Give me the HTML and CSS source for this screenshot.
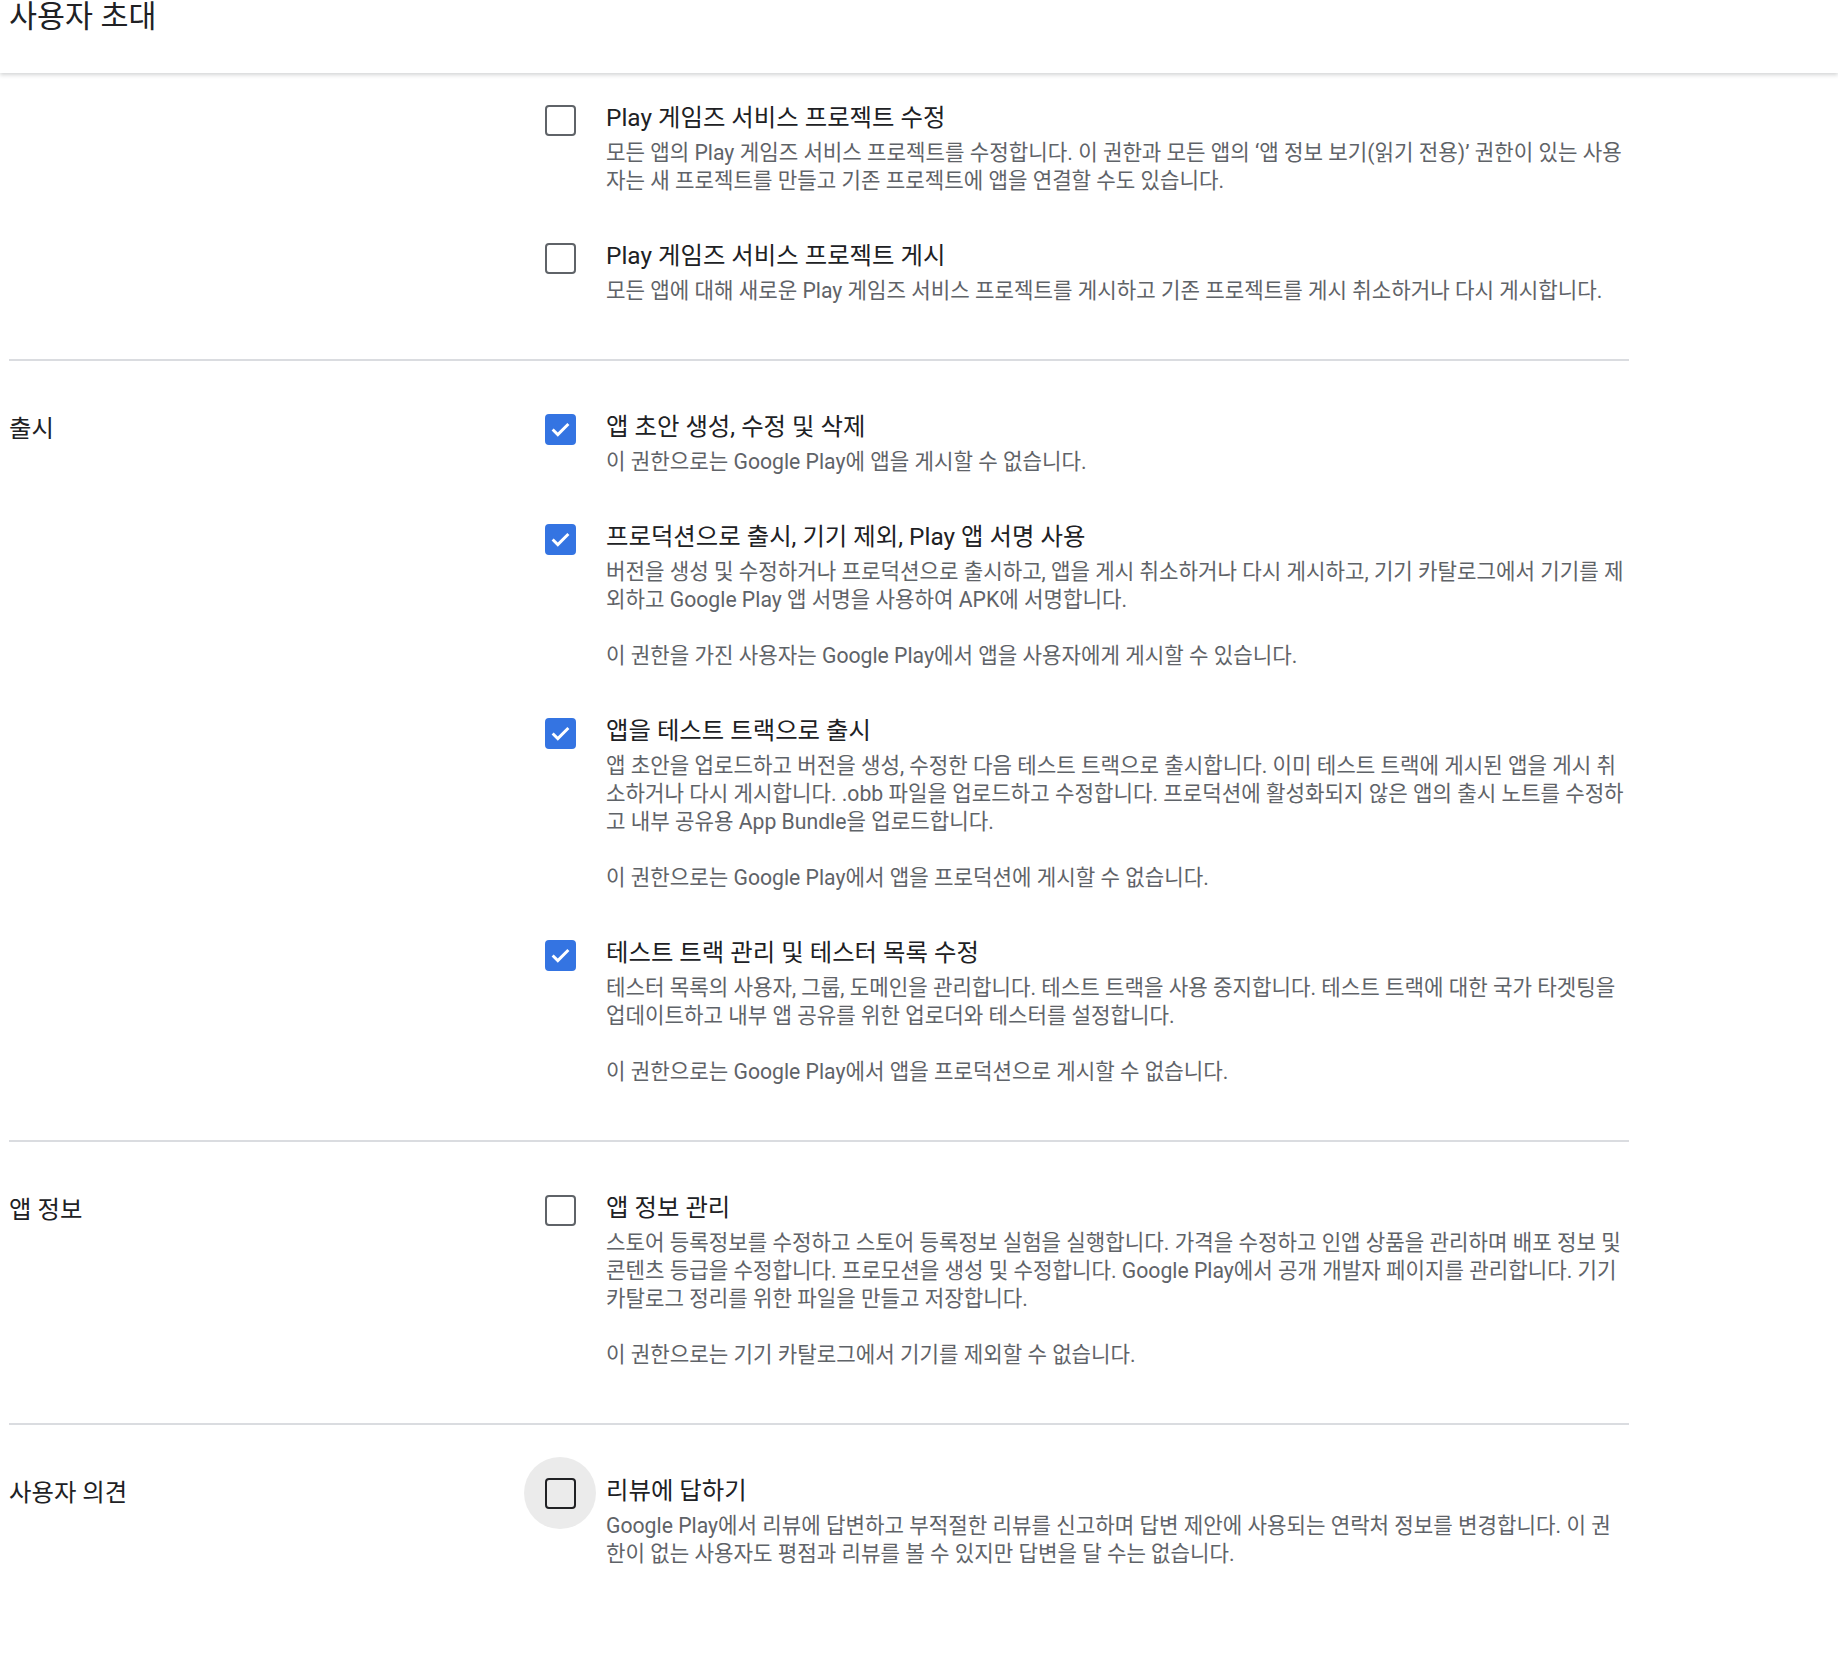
FILE: index.html
```html
<!DOCTYPE html>
<html lang="ko">
<head>
    <meta charset="UTF-8">
    <meta name="viewport" content="width=device-width, initial-scale=1.0">
    <title>사용자 초대 | Play Console</title>
    <link rel="stylesheet" href="styles.css">
</head>
<body>
    <header class="page-header">
        <h1 class="page-title">사용자 초대</h1>
    </header>

    <main class="permissions">
        <!-- Play 게임즈 서비스 (위쪽은 스크롤됨) -->
        <section class="perm-section first">
            <div class="section-label"></div>
            <div class="perm-list">
                <div class="perm-item">
                    <div class="checkbox-touch"><span class="checkbox"></span></div>
                    <div class="perm-text">
                        <div class="perm-title">Play 게임즈 서비스 프로젝트 수정</div>
                        <p class="perm-desc">모든 앱의 Play 게임즈 서비스 프로젝트를 수정합니다. 이 권한과 모든 앱의 ‘앱 정보 보기(읽기 전용)’ 권한이 있는 사용<br>자는 새 프로젝트를 만들고 기존 프로젝트에 앱을 연결할 수도 있습니다.</p>
                    </div>
                </div>
                <div class="perm-item">
                    <div class="checkbox-touch"><span class="checkbox"></span></div>
                    <div class="perm-text">
                        <div class="perm-title">Play 게임즈 서비스 프로젝트 게시</div>
                        <p class="perm-desc">모든 앱에 대해 새로운 Play 게임즈 서비스 프로젝트를 게시하고 기존 프로젝트를 게시 취소하거나 다시 게시합니다.</p>
                    </div>
                </div>
            </div>
        </section>

        <section class="perm-section">
            <div class="section-label">출시</div>
            <div class="perm-list">
                <div class="perm-item">
                    <div class="checkbox-touch"><span class="checkbox checked"><svg viewBox="0 0 24 24"><polyline points="5 12.5 9.6 17 19 7.5"/></svg></span></div>
                    <div class="perm-text">
                        <div class="perm-title">앱 초안 생성, 수정 및 삭제</div>
                        <p class="perm-desc">이 권한으로는 Google Play에 앱을 게시할 수 없습니다.</p>
                    </div>
                </div>
                <div class="perm-item">
                    <div class="checkbox-touch"><span class="checkbox checked"><svg viewBox="0 0 24 24"><polyline points="5 12.5 9.6 17 19 7.5"/></svg></span></div>
                    <div class="perm-text">
                        <div class="perm-title">프로덕션으로 출시, 기기 제외, Play 앱 서명 사용</div>
                        <p class="perm-desc">버전을 생성 및 수정하거나 프로덕션으로 출시하고, 앱을 게시 취소하거나 다시 게시하고, 기기 카탈로그에서 기기를 제<br>외하고 Google Play 앱 서명을 사용하여 APK에 서명합니다.</p>
                        <p class="perm-desc note">이 권한을 가진 사용자는 Google Play에서 앱을 사용자에게 게시할 수 있습니다.</p>
                    </div>
                </div>
                <div class="perm-item">
                    <div class="checkbox-touch"><span class="checkbox checked"><svg viewBox="0 0 24 24"><polyline points="5 12.5 9.6 17 19 7.5"/></svg></span></div>
                    <div class="perm-text">
                        <div class="perm-title">앱을 테스트 트랙으로 출시</div>
                        <p class="perm-desc">앱 초안을 업로드하고 버전을 생성, 수정한 다음 테스트 트랙으로 출시합니다. 이미 테스트 트랙에 게시된 앱을 게시 취<br>소하거나 다시 게시합니다. .obb 파일을 업로드하고 수정합니다. 프로덕션에 활성화되지 않은 앱의 출시 노트를 수정하<br>고 내부 공유용 App Bundle을 업로드합니다.</p>
                        <p class="perm-desc note">이 권한으로는 Google Play에서 앱을 프로덕션에 게시할 수 없습니다.</p>
                    </div>
                </div>
                <div class="perm-item">
                    <div class="checkbox-touch"><span class="checkbox checked"><svg viewBox="0 0 24 24"><polyline points="5 12.5 9.6 17 19 7.5"/></svg></span></div>
                    <div class="perm-text">
                        <div class="perm-title">테스트 트랙 관리 및 테스터 목록 수정</div>
                        <p class="perm-desc">테스터 목록의 사용자, 그룹, 도메인을 관리합니다. 테스트 트랙을 사용 중지합니다. 테스트 트랙에 대한 국가 타겟팅을<br>업데이트하고 내부 앱 공유를 위한 업로더와 테스터를 설정합니다.</p>
                        <p class="perm-desc note">이 권한으로는 Google Play에서 앱을 프로덕션으로 게시할 수 없습니다.</p>
                    </div>
                </div>
            </div>
        </section>

        <section class="perm-section">
            <div class="section-label">앱 정보</div>
            <div class="perm-list">
                <div class="perm-item">
                    <div class="checkbox-touch"><span class="checkbox"></span></div>
                    <div class="perm-text">
                        <div class="perm-title">앱 정보 관리</div>
                        <p class="perm-desc">스토어 등록정보를 수정하고 스토어 등록정보 실험을 실행합니다. 가격을 수정하고 인앱 상품을 관리하며 배포 정보 및<br>콘텐츠 등급을 수정합니다. 프로모션을 생성 및 수정합니다. Google Play에서 공개 개발자 페이지를 관리합니다. 기기<br>카탈로그 정리를 위한 파일을 만들고 저장합니다.</p>
                        <p class="perm-desc note">이 권한으로는 기기 카탈로그에서 기기를 제외할 수 없습니다.</p>
                    </div>
                </div>
            </div>
        </section>

        <section class="perm-section">
            <div class="section-label">사용자 의견</div>
            <div class="perm-list">
                <div class="perm-item">
                    <div class="checkbox-touch hover"><span class="checkbox"></span></div>
                    <div class="perm-text">
                        <div class="perm-title">리뷰에 답하기</div>
                        <p class="perm-desc">Google Play에서 리뷰에 답변하고 부적절한 리뷰를 신고하며 답변 제안에 사용되는 연락처 정보를 변경합니다. 이 권<br>한이 없는 사용자도 평점과 리뷰를 볼 수 있지만 답변을 달 수는 없습니다.</p>
                    </div>
                </div>
            </div>
        </section>
    </main>
</body>
</html>
```

FILE: styles.css
```css
* {
    margin: 0;
    padding: 0;
    box-sizing: border-box;
}

body {
    background-color: #fff;
    font-family: Roboto, "Noto Sans CJK KR", sans-serif;
    color: #202124;
}

.page-header {
    background: #fff;
    padding: 0 9px 39px;
    box-shadow: 0 2px 4px rgba(60, 64, 67, 0.22);
    position: relative;
    z-index: 1;
}

.page-title {
    font-size: 30.4px;
    font-weight: 400;
    line-height: 34px;
    color: #202124;
}

.permissions {
    padding-left: 9px;
}

.perm-section {
    width: 1620px;
    display: grid;
    grid-template-columns: 515px 1fr;
    padding: 51px 0 54px;
    border-top: 2px solid #dadce0;
}

.perm-section.first {
    padding-top: 30px;
    border-top: none;
}

.section-label {
    font-size: 24.4px;
    line-height: 30px;
    padding-top: 2px;
    color: #202124;
}

.perm-list {
    display: flex;
    flex-direction: column;
    gap: 46px;
}

.perm-item {
    display: flex;
    gap: 10px;
}

.checkbox-touch {
    flex: 0 0 72px;
    height: 72px;
    margin-top: -19px;
    display: flex;
    align-items: center;
    justify-content: center;
    border-radius: 50%;
}

.checkbox-touch.hover {
    background: #ebebeb;
}

.checkbox {
    width: 31px;
    height: 31px;
    border: 2.5px solid #5f6368;
    border-radius: 4px;
    display: flex;
    align-items: center;
    justify-content: center;
}

.checkbox-touch.hover .checkbox {
    border-color: #202124;
}

.checkbox.checked {
    background: #3474e2;
    border-color: #3474e2;
}

.checkbox svg {
    width: 28px;
    height: 28px;
    fill: none;
    stroke: #fff;
    stroke-width: 2.6;
}

.perm-text {
    flex: 1;
}

.perm-title {
    font-size: 24.4px;
    line-height: 30px;
    color: #202124;
    margin-bottom: 6px;
}

.perm-desc {
    font-size: 21.2px;
    line-height: 28px;
    color: #5f6368;
    white-space: nowrap;
}

.perm-desc.note {
    margin-top: 28px;
}
```
